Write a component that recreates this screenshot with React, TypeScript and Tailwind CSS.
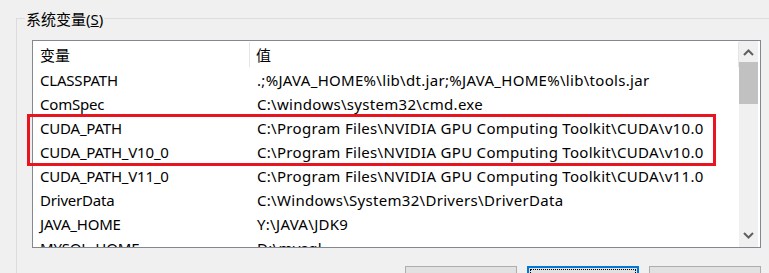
const ROWS = [
  { name: 'CLASSPATH', value: '.;%JAVA_HOME%\\lib\\dt.jar;%JAVA_HOME%\\lib\\tools.jar' },
  { name: 'ComSpec', value: 'C:\\windows\\system32\\cmd.exe' },
  { name: 'CUDA_PATH', value: 'C:\\Program Files\\NVIDIA GPU Computing Toolkit\\CUDA\\v10.0' },
  { name: 'CUDA_PATH_V10_0', value: 'C:\\Program Files\\NVIDIA GPU Computing Toolkit\\CUDA\\v10.0' },
  { name: 'CUDA_PATH_V11_0', value: 'C:\\Program Files\\NVIDIA GPU Computing Toolkit\\CUDA\\v11.0' },
  { name: 'DriverData', value: 'C:\\Windows\\System32\\Drivers\\DriverData' },
  { name: 'JAVA_HOME', value: 'Y:\\JAVA\\JDK9' },
  { name: 'MYSQL_HOME', value: 'D:\\mysql' },
]

function Chevron({ up }: { up?: boolean }) {
  return (
    <svg width="11" height="7" viewBox="0 0 11 7" className="text-[#606060]">
      <path d={up ? 'M1 6 L5.5 1.5 L10 6' : 'M1 1 L5.5 5.5 L10 1'} fill="none" stroke="currentColor" strokeWidth="2" />
    </svg>
  )
}

export default function App() {
  return (
    <div className="relative w-[769px] h-[273px] overflow-hidden bg-[#f0f0f0] text-[15px] text-black font-['Noto_Sans','Noto_Sans_CJK_SC',sans-serif]">
      <div className="ml-[16px] mt-[18px] relative border-l border-t border-[#dcdcdc] pl-[15px] pt-[21px]">
        {/* group title */}
        <div className="absolute left-[8px] -top-[10px] bg-[#f0f0f0] px-px leading-[20px]">
          系统变量(<span className="underline">S</span>)
        </div>

        {/* list box */}
        <div className="w-[729px] h-[208px] border border-[#828790] bg-white flex">
          <div className="flex-1 flex flex-col overflow-hidden">
            <div className="flex h-[27px] shrink-0 leading-[27px] pt-px">
              <div className="w-[217px] pl-[7px] border-r border-[#e5e5e5] mb-px">变量</div>
              <div className="flex-1 pl-[6px] border-r border-[#e5e5e5] mb-px">值</div>
            </div>
            {ROWS.map(r => (
              <div key={r.name} className="flex h-[24px] shrink-0 leading-[24px] whitespace-nowrap">
                <div className="w-[218px] pl-[7px] tracking-[-0.2px]">{r.name}</div>
                <div className="flex-1 pl-[6px] tracking-[0.3px]">{r.value}</div>
              </div>
            ))}
          </div>
          <div className="w-[19px] mr-[2px] bg-[#f0f0f0] flex flex-col shrink-0">
            <div className="h-[21px] flex items-center justify-center pt-[2px]"><Chevron up /></div>
            <div className="h-[42px] bg-[#c1c1c1]" />
            <div className="flex-1" />
            <div className="h-[21px] flex items-center justify-center pb-[2px]"><Chevron /></div>
          </div>
        </div>

        {/* buttons */}
        <div className="w-[729px] mt-[18px] flex justify-end gap-[10px]">
          <div className="w-[112px] h-[28px] bg-[#e1e1e1] border border-[#adadad]" />
          <div className="w-[112px] h-[28px] bg-[#e1e1e1] border-2 border-[#0078d7] p-px">
            <div className="w-full h-full border border-dotted border-black" />
          </div>
          <div className="w-[112px] h-[28px] bg-[#e1e1e1] border border-[#adadad]" />
        </div>
      </div>

      {/* red highlight */}
      <div className="absolute left-[27px] top-[114px] w-[689px] h-[52px] border-[3px] border-[#e8141f]" />
    </div>
  )
}
